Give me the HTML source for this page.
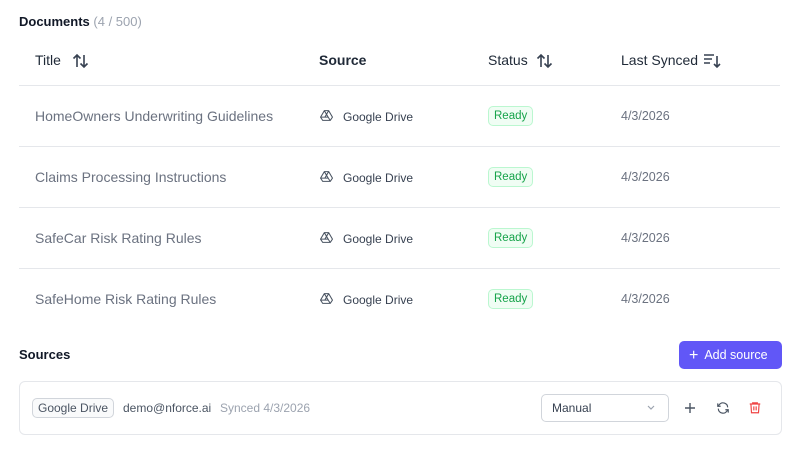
<!DOCTYPE html>
<html><head><meta charset="utf-8"><style>
*{margin:0;padding:0;box-sizing:border-box}
body{width:800px;height:456px;background:#fff;font-family:"Liberation Sans",sans-serif;position:relative;overflow:hidden;color:#111827}
.a{position:absolute;white-space:nowrap}
.h{font-size:14px;color:#1f2937}
.line{position:absolute;left:19px;width:761px;height:1px;background:#e5e7eb}
.t{font-size:14px;color:#6b7280}
.src{font-size:12px;color:#374151}
.date{font-size:12.5px;color:#6b7280}
.badge{position:absolute;left:488px;height:20px;padding:0 5px;border:1px solid #bbf7d0;background:#f0fdf4;color:#16a34a;font-size:11.5px;line-height:18px;border-radius:5px}
</style></head><body>
<div class="a" style="left:19px;top:14px;font-size:13px;font-weight:bold">Documents <span style="font-weight:normal;color:#9ca3af">(4 / 500)</span></div>
<div class="a h" style="left:35px;top:52px">Title</div>
<svg class="a" style="left:72px;top:53px" width="18" height="16" viewBox="0 0 18 16" fill="none" stroke="#374151" stroke-width="1.6"><path d="M5 14V2M1.5 5.5L5 2l3.5 3.5M12 2v12M8.5 10.5L12 14l3.5-3.5"/></svg>
<div class="a h" style="left:319px;top:52px;font-weight:bold">Source</div>
<div class="a h" style="left:488px;top:52px">Status</div>
<svg class="a" style="left:536px;top:53px" width="18" height="16" viewBox="0 0 18 16" fill="none" stroke="#374151" stroke-width="1.6"><path d="M5 14V2M1.5 5.5L5 2l3.5 3.5M12 2v12M8.5 10.5L12 14l3.5-3.5"/></svg>
<div class="a h" style="left:621px;top:52px">Last Synced</div>
<svg class="a" style="left:703px;top:53px" width="18" height="16" viewBox="0 0 18 16" fill="none" stroke="#374151" stroke-width="1.6"><path d="M1 2h10M1 6h8M1 10h6M14 3v11M11 11l3 3 3-3"/></svg>
<div class="line" style="top:85px"></div>
<div class="line" style="top:146px"></div>
<div class="line" style="top:207px"></div>
<div class="line" style="top:268px"></div>

<div class="a t" style="left:35px;top:108px">HomeOwners Underwriting Guidelines</div>
<div class="a t" style="left:35px;top:169px">Claims Processing Instructions</div>
<div class="a t" style="left:35px;top:230px">SafeCar Risk Rating Rules</div>
<div class="a t" style="left:35px;top:291px">SafeHome Risk Rating Rules</div>

<svg class="a" style="left:320px;top:109px" width="13" height="13" viewBox="0 0 24 24" fill="none" stroke="#4b5563" stroke-width="2"><path d="M8 3h8l7 12-4 6H5l-4-6z M8 3l7 12H1 M16 3L9 15 M19 21l-4-6"/></svg>
<svg class="a" style="left:320px;top:170px" width="13" height="13" viewBox="0 0 24 24" fill="none" stroke="#4b5563" stroke-width="2"><path d="M8 3h8l7 12-4 6H5l-4-6z M8 3l7 12H1 M16 3L9 15 M19 21l-4-6"/></svg>
<svg class="a" style="left:320px;top:231px" width="13" height="13" viewBox="0 0 24 24" fill="none" stroke="#4b5563" stroke-width="2"><path d="M8 3h8l7 12-4 6H5l-4-6z M8 3l7 12H1 M16 3L9 15 M19 21l-4-6"/></svg>
<svg class="a" style="left:320px;top:292px" width="13" height="13" viewBox="0 0 24 24" fill="none" stroke="#4b5563" stroke-width="2"><path d="M8 3h8l7 12-4 6H5l-4-6z M8 3l7 12H1 M16 3L9 15 M19 21l-4-6"/></svg>
<div class="a src" style="left:343px;top:110px">Google Drive</div>
<div class="a src" style="left:343px;top:171px">Google Drive</div>
<div class="a src" style="left:343px;top:232px">Google Drive</div>
<div class="a src" style="left:343px;top:293px">Google Drive</div>

<div class="badge" style="top:106px">Ready</div>
<div class="badge" style="top:167px">Ready</div>
<div class="badge" style="top:228px">Ready</div>
<div class="badge" style="top:289px">Ready</div>

<div class="a date" style="left:621px;top:109px">4/3/2026</div>
<div class="a date" style="left:621px;top:170px">4/3/2026</div>
<div class="a date" style="left:621px;top:231px">4/3/2026</div>
<div class="a date" style="left:621px;top:292px">4/3/2026</div>

<div class="a" style="left:19px;top:347px;font-size:13px;font-weight:bold">Sources</div>
<div class="a" style="left:679px;top:341px;width:103px;height:28px;background:#6157f7;border-radius:5px;color:#fff;font-size:12.5px;line-height:28px;padding-left:10px"><span style="font-size:16px;vertical-align:-1px;margin-right:6px">+</span>Add source</div>

<div class="a" style="left:19px;top:381px;width:763px;height:54px;border:1px solid #e5e7eb;border-radius:6px"></div>
<div class="a" style="left:32px;top:398px;height:20px;padding:0 5px;border:1px solid #d1d5db;background:#f9fafb;border-radius:5px;font-size:12px;line-height:18px;color:#4b5563">Google Drive</div>
<div class="a" style="left:123px;top:401px;font-size:12px;color:#4b5563">demo@nforce.ai</div>
<div class="a" style="left:220px;top:401px;font-size:12px;color:#9ca3af">Synced 4/3/2026</div>
<div class="a" style="left:541px;top:394px;width:128px;height:28px;border:1px solid #d1d5db;border-radius:5px;font-size:12px;line-height:26px;padding-left:10px;color:#374151">Manual</div>
<svg class="a" style="left:646px;top:404px" width="10" height="8" viewBox="0 0 10 8" fill="none" stroke="#9ca3af" stroke-width="1.2"><path d="M2 2l3 3 3-3"/></svg>
<svg class="a" style="left:684px;top:402px" width="12" height="12" viewBox="0 0 12 12" stroke="#4b5563" stroke-width="1.4"><path d="M6 1v10M1 6h10"/></svg>
<svg class="a" style="left:716px;top:401px" width="14" height="14" viewBox="0 0 24 24" fill="none" stroke="#4b5563" stroke-width="2"><path d="M20 11a8 8 0 0 0-14.5-4.5L3 9M3 4v5h5M4 13a8 8 0 0 0 14.5 4.5L21 15M21 20v-5h-5"/></svg>
<svg class="a" style="left:748px;top:400px" width="14" height="15" viewBox="0 0 24 24" fill="none" stroke="#ef4444" stroke-width="2"><path d="M3 6h18M8 6V4h8v2M5 6l1 15h12l1-15M10 10v7M14 10v7"/></svg>
</body></html>
